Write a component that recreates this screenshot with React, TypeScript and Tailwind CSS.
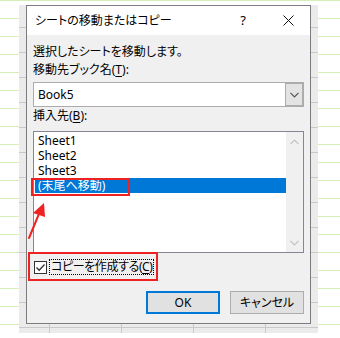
const font = "font-['Noto_Sans','Noto_Sans_CJK_JP',sans-serif] [font-feature-settings:'palt']";

function Chevron({ up = false, color }: { up?: boolean; color: string }) {
  return (
    <svg width="9" height="6" viewBox="0 0 9 6" className={up ? "rotate-180" : ""}>
      <polyline points="0.5,0.8 4.5,4.8 8.5,0.8" fill="none" stroke={color} strokeWidth="1.2" />
    </svg>
  );
}

function Dialog() {
  const sheets = ["Sheet1", "Sheet2", "Sheet3"];
  return (
    <div className="flex h-[319px] w-[285px] flex-col border border-[#7c7c7c] bg-[#f0f0f0]">
      {/* title bar */}
      <div className="flex h-[29px] items-center bg-white pl-[8px]">
        <span className="leading-none">シートの移動またはコピー</span>
        <span className="ml-auto text-[13px] leading-none">?</span>
        <svg width="11" height="11" viewBox="0 0 11 11" className="ml-[37px] mr-[16px]">
          <path d="M0.5 0.5 L10.5 10.5 M10.5 0.5 L0.5 10.5" stroke="#111" strokeWidth="1" />
        </svg>
      </div>

      <div className="flex flex-1 flex-col px-[6px] pt-[8px]">
        <div className="h-[18px] leading-[18px]">選択したシートを移動します。</div>
        <div className="h-[18px] leading-[18px]">
          移動先ブック名(<span className="underline underline-offset-2">T</span>):
        </div>

        {/* combobox */}
        <div className="mt-[3px] flex h-[25px] border border-[#acacac] bg-white">
          <div className="flex flex-1 items-center pl-[4px]">Book5</div>
          <div className="flex w-[18px] items-center justify-center border border-[#acacac] bg-[#e3e3e3]">
            <Chevron color="#555" />
          </div>
        </div>

        <div className="h-[18px] leading-[18px]">
          挿入先(<span className="underline underline-offset-2">B</span>):
        </div>

        {/* list box */}
        <div className="mt-[6px] flex h-[122px] border border-[#828790] bg-white">
          <div className="flex flex-1 flex-col pl-px pt-px">
            {sheets.map((s) => (
              <div key={s} className="h-[15px] overflow-hidden pl-[3px] leading-[15px]">
                {s}
              </div>
            ))}
            <div className="h-[15px] overflow-hidden bg-[#0078d7] pl-[3px] leading-[15px] text-white">(末尾へ移動)</div>
          </div>
          <div className="flex w-[17px] flex-col items-center justify-between bg-[#f0f0f0] pb-[6px] pt-[7px]">
            <Chevron up color="#c2c2c2" />
            <Chevron color="#c2c2c2" />
          </div>
        </div>

        {/* checkbox */}
        <div className="mt-[6px] flex h-[16px] items-center">
          <div className="ml-px flex h-[13px] w-[13px] shrink-0 items-center justify-center border border-[#333] bg-white">
            <svg width="11" height="11" viewBox="0 0 11 11">
              <polyline points="1.5,5.5 4.2,8.3 9.5,2.5" fill="none" stroke="#333" strokeWidth="1.3" />
            </svg>
          </div>
          <div className="ml-[2px] h-[16px] whitespace-nowrap border border-dotted border-black px-px leading-[14px] tracking-[-0.4px]">
            コピーを作成する(<span className="underline underline-offset-2">C</span>)
          </div>
        </div>

        {/* buttons */}
        <div className="mt-[16px] flex justify-end gap-[10px]">
          <button className="h-[23px] w-[74px] border-2 border-[#0078d7] bg-[#e1e1e1] leading-none">OK</button>
          <button className="h-[23px] w-[74px] border border-[#adadad] bg-[#e1e1e1] leading-none">キャンセル</button>
        </div>
      </div>
    </div>
  );
}

export default function App() {
  return (
    <div
      className={`relative h-[338px] w-[340px] overflow-hidden bg-white bg-[image:repeating-linear-gradient(to_bottom,#d6efb8_0_1px,transparent_1px_18px)] pt-[5px] text-[12px] text-black ${font}`}
    >
      {/* window shadow over the sheet grid */}
      <div className="ml-[19px] h-[328px] w-[299px] bg-[#ebebeb] bg-[image:repeating-linear-gradient(to_bottom,transparent_0_22px,#c9c9c9_22px_23px,transparent_23px_25px),repeating-linear-gradient(to_right,transparent_0_30px,#c9c9c9_30px_31px,transparent_31px_72px)] px-[7px] pb-[9px]">
        <Dialog />
      </div>

      {/* annotations */}
      <div className="absolute left-[31px] top-[178px] h-[18px] w-[99px] border-2 border-[#ee2222]" />
      <div className="absolute left-[28px] top-[252px] h-[29px] w-[130px] border-2 border-[#ee2222]" />
      <svg className="absolute left-0 top-0" width="60" height="250" viewBox="0 0 60 250">
        <path d="M29 238 L38.5 215" stroke="#ee2222" strokeWidth="2" strokeLinecap="round" />
        <polygon points="44,203 33,213 45,217" fill="#ee2222" />
      </svg>
    </div>
  );
}
